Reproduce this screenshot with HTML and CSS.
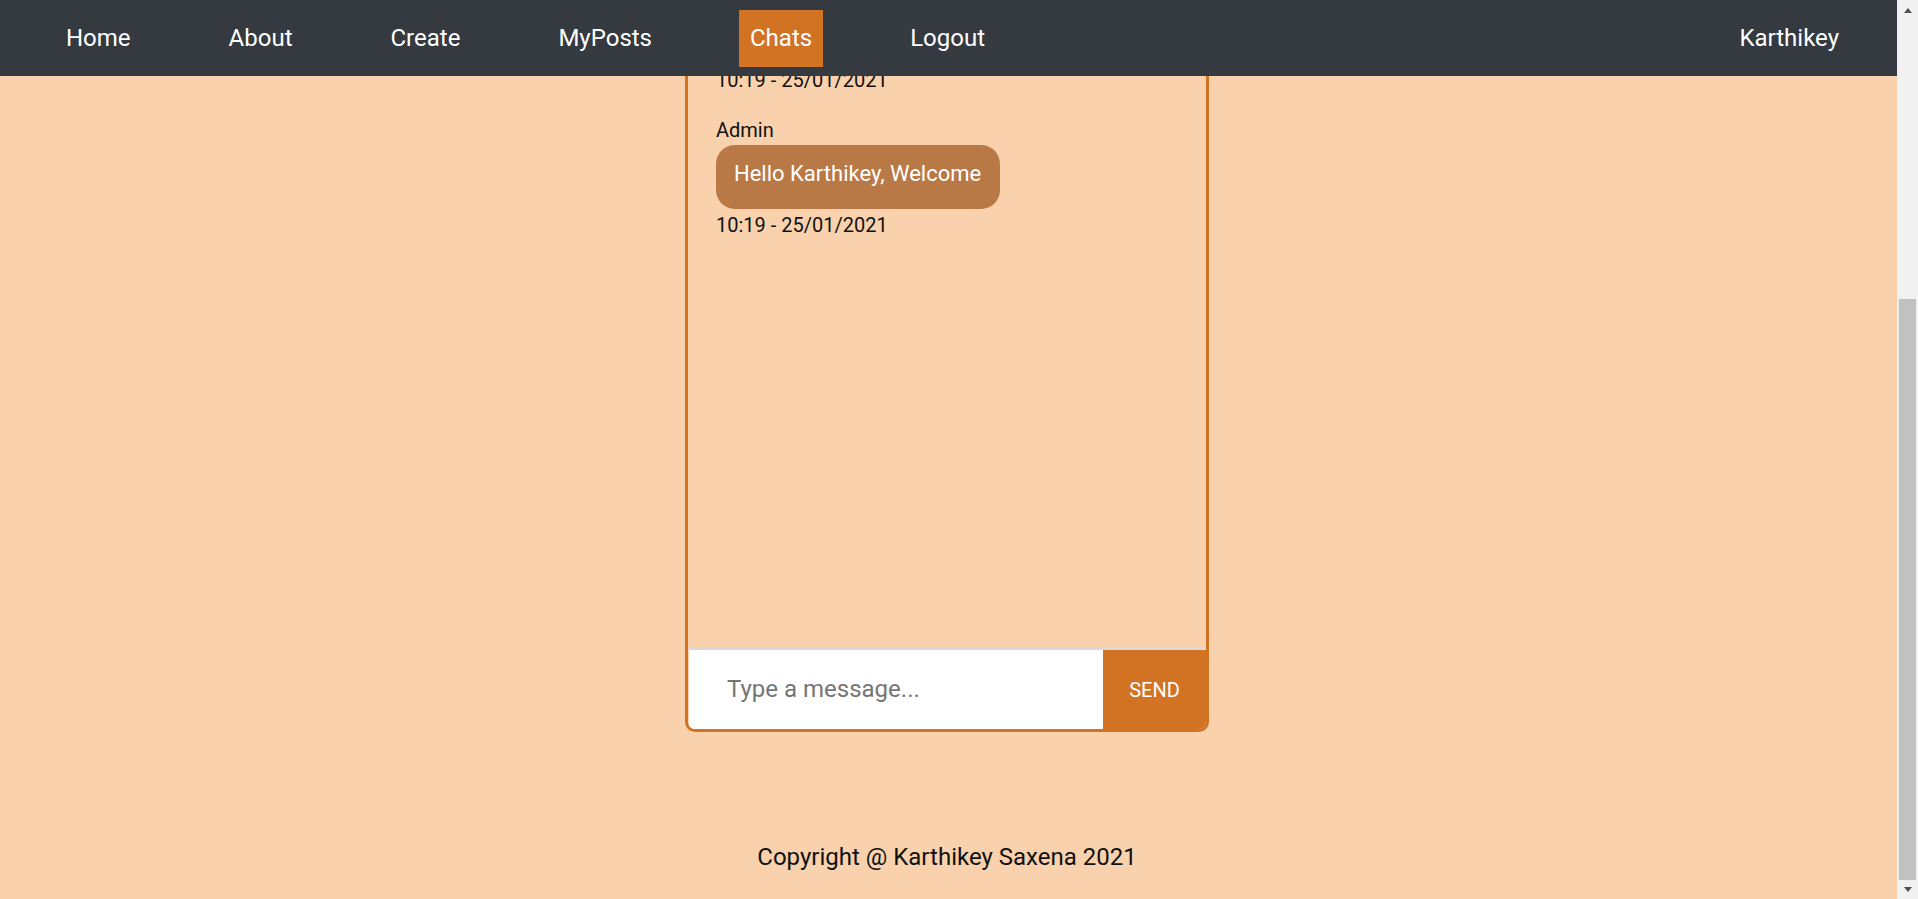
FILE: index.html
```html
<!DOCTYPE html>
<html lang="en">
<head>
<meta charset="utf-8">
<title>Chats</title>
<link rel="stylesheet" href="styles.css">
</head>
<body>
<div class="app">
  <nav class="navbar">
    <div class="nav-links">
      <a class="nav-link" href="#">Home</a>
      <a class="nav-link" href="#">About</a>
      <a class="nav-link" href="#">Create</a>
      <a class="nav-link" href="#">MyPosts</a>
      <a class="nav-link active" href="#">Chats</a>
      <a class="nav-link" href="#">Logout</a>
    </div>
    <a class="nav-link nav-user" href="#">Karthikey</a>
  </nav>

  <div class="scroller" id="scroller">
    <main class="page">
      <section class="chat-box">
        <div class="messages">
          <div class="message">
            <div class="sender">Admin</div>
            <div class="bubble">How are you?</div>
            <div class="time">10:19 - 25/01/2021</div>
          </div>
          <div class="message">
            <div class="sender">Admin</div>
            <div class="bubble">Hello Karthikey, Welcome</div>
            <div class="time">10:19 - 25/01/2021</div>
          </div>
        </div>
        <form class="composer">
          <input class="composer-input" type="text" placeholder="Type a message...">
          <button class="send-btn" type="button">SEND</button>
        </form>
      </section>
    </main>
    <footer class="footer">Copyright @ Karthikey Saxena 2021</footer>
  </div>
</div>

<div class="scrollbar" aria-hidden="true">
  <div class="sb-btn sb-up"><span class="tri-up"></span></div>
  <div class="sb-track"><div class="sb-thumb"></div></div>
  <div class="sb-btn sb-down"><span class="tri-down"></span></div>
</div>
<script src="script.js"></script>
</body>
</html>
```

FILE: styles.css
```css
* { box-sizing: border-box; }

html, body {
  margin: 0;
  padding: 0;
  height: 100%;
}

body {
  background: #f9d1ad;
  font-family: Roboto, "Liberation Sans", Arial, sans-serif;
  color: #111;
  display: flex;
  overflow: hidden;
}

.app {
  flex: 1;
  min-width: 0;
  display: flex;
  flex-direction: column;
  height: 100%;
}

.navbar {
  flex: 0 0 76px;
  background: #343a40;
  display: flex;
  align-items: center;
  justify-content: space-between;
  padding: 0 47px 0 17px;
}

.nav-links {
  display: flex;
  align-items: center;
}

.nav-link {
  color: #fff;
  text-decoration: none;
  font-size: 24px;
  line-height: 28px;
  padding: 14px 11px 15px;
  margin: 0 38px;
}

.nav-link.active {
  background: #d27324;
}

.nav-user {
  margin: 0;
}

.scroller {
  flex: 1;
  overflow-y: auto;
  scrollbar-width: none;
}

.scroller::-webkit-scrollbar {
  display: none;
}

.page {
  display: flex;
  justify-content: center;
  padding: 15px 3px 0 0;
}

.chat-box {
  width: 524px;
  height: 1077px;
  border: 3px solid #d27324;
  border-radius: 10px;
  display: flex;
  flex-direction: column;
  overflow: hidden;
}

.messages {
  flex: 1;
  display: flex;
  flex-direction: column;
  justify-content: flex-end;
  padding: 28px 28px 411px;
}

.message {
  margin-top: 26px;
  display: flex;
  flex-direction: column;
  align-items: flex-start;
}

.sender,
.time {
  font-size: 20px;
  line-height: 24px;
  color: #111;
}

.bubble {
  margin: 3px 0 4px;
  background: #b87946;
  color: #fff;
  font-size: 22px;
  line-height: 26px;
  padding: 16px 19px 22px 18px;
  border-radius: 19px;
}

.composer {
  display: flex;
  height: 81px;
  border-top: 2px solid #d9d9d9;
  margin: 0;
}

.composer-input {
  flex: 1;
  border: none;
  outline: none;
  background: #fff;
  font-family: Roboto, "Liberation Sans", Arial, sans-serif;
  font-size: 24px;
  padding: 0 0 2px 38px;
  margin-left: 1px;
  color: #333;
}

.composer-input::placeholder {
  color: #757575;
}

.send-btn {
  width: 103px;
  border: none;
  background: #d27324;
  color: #fff;
  font-family: Roboto, "Liberation Sans", Arial, sans-serif;
  font-size: 20px;
  padding: 0;
}

.footer {
  text-align: center;
  font-size: 24px;
  line-height: 28px;
  padding: 111px 3px 28px 0;
  color: #111;
}

/* simulated browser scrollbar */
.scrollbar {
  flex: 0 0 21px;
  height: 100%;
  background: #f1f1f1;
  display: flex;
  flex-direction: column;
}

.sb-btn {
  display: flex;
  align-items: center;
  justify-content: center;
}

.sb-up { height: 21px; }
.sb-down { height: 19px; }

.tri-up {
  width: 0;
  height: 0;
  border-left: 4.5px solid transparent;
  border-right: 4.5px solid transparent;
  border-bottom: 5px solid #505050;
  margin-bottom: 1px;
}

.tri-down {
  width: 0;
  height: 0;
  border-left: 4.5px solid transparent;
  border-right: 4.5px solid transparent;
  border-top: 5px solid #505050;
}

.sb-track {
  flex: 1;
  padding: 0 2px;
}

.sb-thumb {
  margin-top: 278px;
  height: 581px;
  background: #c1c1c1;
}
```

FILE: script.js
```js
var s = document.getElementById('scroller');
s.scrollTop = s.scrollHeight;
window.addEventListener('load', function () {
  s.scrollTop = s.scrollHeight;
});
```
